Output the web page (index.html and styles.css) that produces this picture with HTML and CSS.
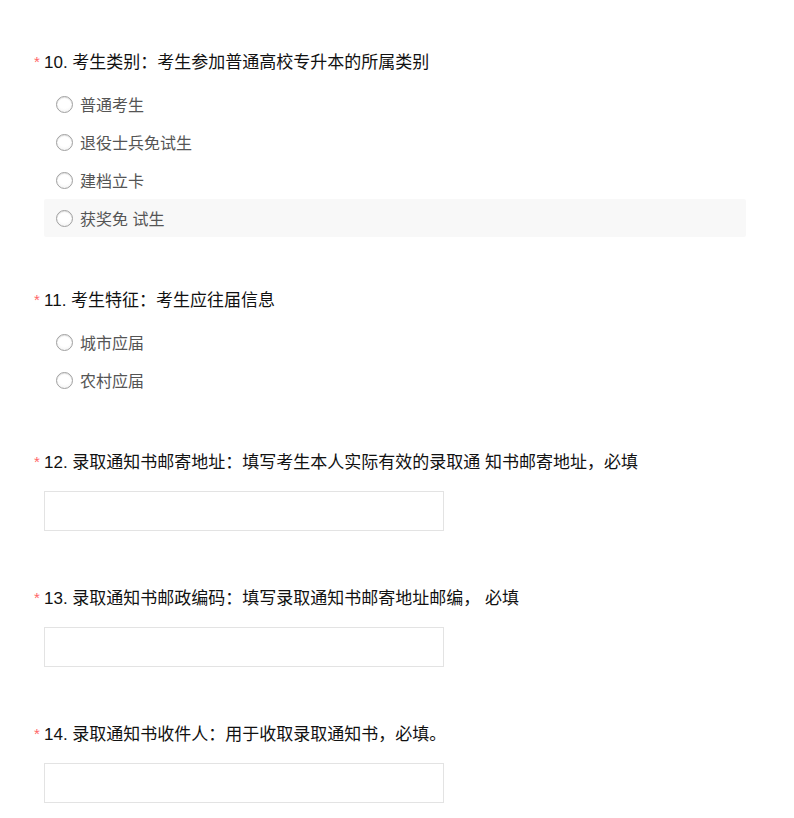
FILE: index.html
```html
<!DOCTYPE html>
<html lang="zh-CN">
<head>
    <meta charset="UTF-8">
    <meta name="viewport" content="width=device-width, initial-scale=1.0">
    <title>考生信息</title>
    <link rel="stylesheet" href="styles.css">
</head>
<body>
    <div class="survey">
        <div class="question">
            <div class="q-title"><span class="req">*</span>10. 考生类别：考生参加普通高校专升本的所属类别</div>
            <div class="options">
                <label class="option"><span class="radio"></span>普通考生</label>
                <label class="option"><span class="radio"></span>退役士兵免试生</label>
                <label class="option"><span class="radio"></span>建档立卡</label>
                <label class="option hover"><span class="radio"></span>获奖免 试生</label>
            </div>
        </div>

        <div class="question">
            <div class="q-title"><span class="req">*</span>11. 考生特征：考生应往届信息</div>
            <div class="options">
                <label class="option"><span class="radio"></span>城市应届</label>
                <label class="option"><span class="radio"></span>农村应届</label>
            </div>
        </div>

        <div class="question text-q">
            <div class="q-title"><span class="req">*</span>12. 录取通知书邮寄地址：填写考生本人实际有效的录取通 知书邮寄地址，必填</div>
            <div class="field"><input type="text"></div>
        </div>

        <div class="question text-q">
            <div class="q-title"><span class="req">*</span>13. 录取通知书邮政编码：填写录取通知书邮寄地址邮编， 必填</div>
            <div class="field"><input type="text"></div>
        </div>

        <div class="question text-q">
            <div class="q-title"><span class="req">*</span>14. 录取通知书收件人：用于收取录取通知书，必填。</div>
            <div class="field"><input type="text"></div>
        </div>
    </div>
</body>
</html>
```

FILE: styles.css
```css
body {
    margin: 0;
    background: #fff;
    font-family: 'Liberation Sans', 'Noto Sans CJK SC', sans-serif;
    color: #1a1a1a;
}
.survey {
    padding: 50px 48px 0 44px;
}
.question {
    margin-bottom: 51px;
}
.text-q {
    margin-bottom: 50px;
    padding-bottom: 5px;
}
.question:last-child {
    margin-bottom: 0;
    padding-bottom: 0;
}
.q-title {
    font-size: 17px;
    line-height: 24px;
    color: #111;
}
.req {
    display: inline-block;
    width: 10px;
    margin-left: -10px;
    color: #f66;
    font-size: 15px;
    vertical-align: 1px;
}
.options {
    margin-top: 10px;
}
.option {
    display: flex;
    align-items: center;
    height: 38px;
    padding-left: 12px;
    border-radius: 2px;
    font-size: 16px;
    color: #555;
    cursor: pointer;
}
.option.hover {
    background: #f8f8f8;
}
.radio {
    width: 15px;
    height: 15px;
    margin-right: 7px;
    border: 1px solid #a0a0a0;
    border-radius: 50%;
    background: radial-gradient(circle at 50% 35%, #fff 50%, #ececec 100%);
    box-shadow: inset 0 1px 1px rgba(0,0,0,0.12);
}
.field {
    margin-top: 16px;
}
.field input {
    display: block;
    box-sizing: border-box;
    width: 400px;
    height: 40px;
    margin: 0;
    padding: 0 10px;
    border: 1px solid #e3e3e3;
    border-radius: 0;
    font-size: 15px;
    outline: none;
}
```
